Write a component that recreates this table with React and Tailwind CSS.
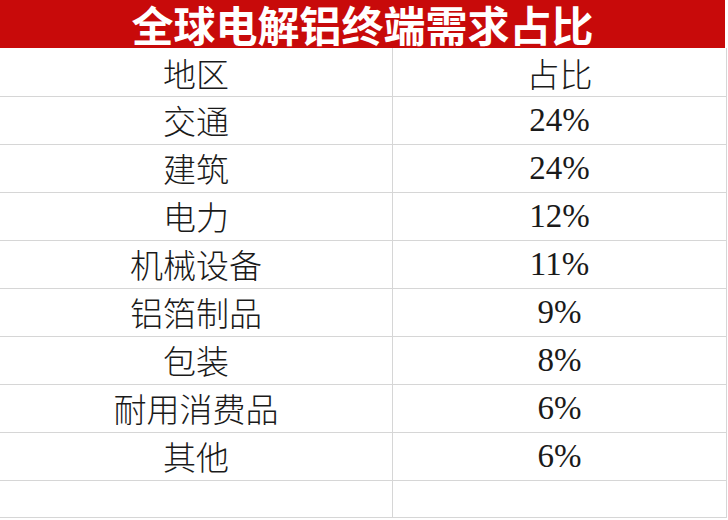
export default function App() {
  const rows = [
    ["交通", "24%"],
    ["建筑", "24%"],
    ["电力", "12%"],
    ["机械设备", "11%"],
    ["铝箔制品", "9%"],
    ["包装", "8%"],
    ["耐用消费品", "6%"],
    ["其他", "6%"],
    ["", ""],
  ];
  return (
    <div className="w-[728px] h-[520px] bg-white overflow-hidden">
      <div className="h-[48px] w-[725px] bg-[#c80a0a] flex items-center justify-center text-white font-bold text-[42px] leading-none font-['Noto_Sans_CJK_SC','Noto_Sans',sans-serif]">
        全球电解铝终端需求占比
      </div>
      <div className="w-[727px] border-r border-[#d6d6d6]">
        <div className="grid grid-cols-[393px_1fr] h-[49px] border-b border-[#d6d6d6]">
          <div className="border-r border-[#d6d6d6] flex items-center justify-center pt-[3px] text-[33px] leading-none font-light text-[#1a1a1a] font-['Noto_Sans_CJK_SC','Noto_Sans',sans-serif]">地区</div>
          <div className="flex items-center justify-center pt-[3px] text-[33px] leading-none font-light text-[#1a1a1a] font-['Noto_Sans_CJK_SC','Noto_Sans',sans-serif]">占比</div>
        </div>
        {rows.map(([a, b], i) => (
          <div
            key={i}
            className={`grid grid-cols-[393px_1fr] border-b border-[#d6d6d6] ${i === rows.length - 1 ? "h-[37px]" : "h-[48px]"}`}
          >
            <div className="border-r border-[#d6d6d6] flex items-center justify-center text-[33px] font-light text-[#1a1a1a] leading-none font-['Noto_Sans_CJK_SC','Noto_Sans',sans-serif]">{a}</div>
            <div className="flex items-center justify-center text-[33px] text-[#1a1a1a] leading-none font-['Liberation_Serif','Noto_Sans_CJK_SC',serif]">{b}</div>
          </div>
        ))}
      </div>
    </div>
  );
}
